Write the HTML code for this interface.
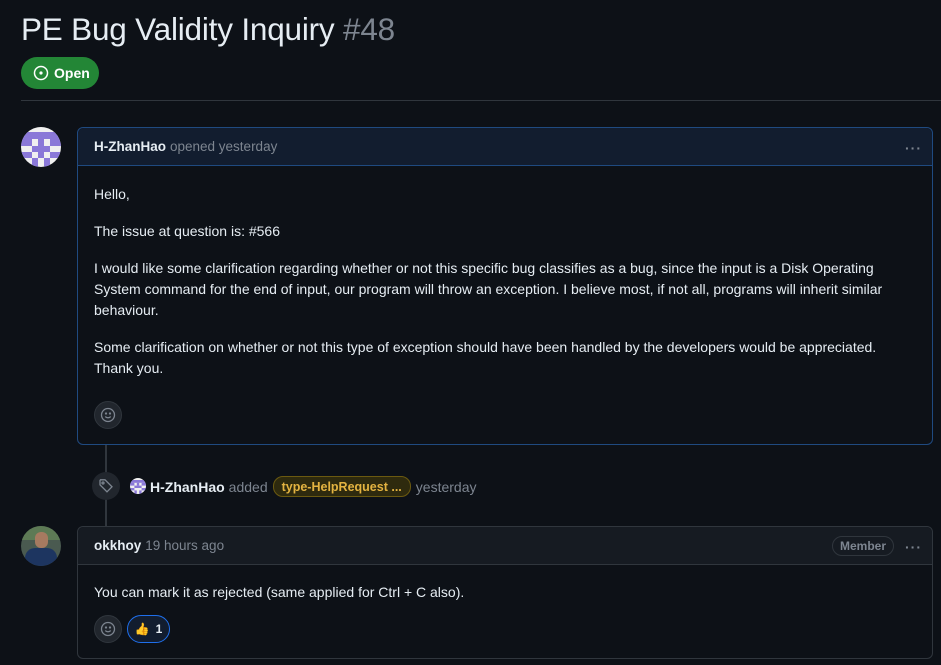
<!DOCTYPE html>
<html><head><meta charset="utf-8"><style>
*{box-sizing:border-box;margin:0;padding:0}
body{width:941px;height:665px;overflow:hidden;background:#0d1117;color:#e6edf3;font-family:"Liberation Sans",sans-serif;font-size:14px;position:relative}
.abs{position:absolute}
h1{position:absolute;left:21px;top:11px;font-weight:400;font-size:31.5px;color:#e6edf3;letter-spacing:-0.2px}
h1 span{color:#7d8590}
.open{left:21px;top:57px;width:78px;height:32px;border-radius:16px;background:#238636;color:#fff;font-weight:700;font-size:14px;display:flex;align-items:center;padding-left:12px;gap:5px}
.hr{left:21px;top:100px;width:920px;height:1px;background:#30363d}
.av{border-radius:50%;overflow:hidden}
.card{border:1px solid #30363d;border-radius:6px}
.hd{position:absolute;left:0;right:0;top:0;height:38px;border-bottom:1px solid #30363d;background:#161b22;border-radius:6px 6px 0 0;padding-left:16px;display:flex;align-items:center;font-size:13.5px;color:#7d8590}
.hd b{color:#e6edf3;margin-right:4px}
.dots{position:absolute;right:10px;top:12px;color:#7d8590;font-size:14px;letter-spacing:1px;font-weight:700}
.body p{margin-bottom:16px;line-height:21px;font-size:14px}
.react{width:28px;height:28px;border-radius:50%;background:#21262d;border:1px solid #30363d;display:flex;align-items:center;justify-content:center}
</style></head><body>
<h1>PE Bug Validity Inquiry <span>#48</span></h1>
<div class="abs open"><svg width="16" height="16" viewBox="0 0 16 16"><circle cx="8" cy="8" r="6.5" fill="none" stroke="#fff" stroke-width="1.5"/><circle cx="8" cy="8" r="1.6" fill="#fff"/></svg>Open</div>
<div class="abs hr"></div>

<div class="abs" style="left:105px;top:444px;width:2px;height:82px;background:#30363d"></div>

<div class="abs av" style="left:21px;top:127px;width:40px;height:40px;background:#f0f0f0">
<svg width="40" height="40" viewBox="0 0 40 40"><g fill="#8a78d8"><rect x="0" y="5" width="40" height="7"/><rect x="0" y="12" width="11" height="7"/><rect x="17" y="12" width="6" height="7"/><rect x="29" y="12" width="11" height="7"/><rect x="11" y="19" width="18" height="6"/><rect x="0" y="25" width="11" height="6"/><rect x="17" y="25" width="6" height="6"/><rect x="29" y="25" width="11" height="6"/><rect x="11" y="31" width="6" height="9"/><rect x="23" y="31" width="6" height="9"/></g></svg></div>
<div class="abs card" style="left:77px;top:127px;width:856px;height:318px;border-color:#1f4a80">
<div class="hd" style="background:#121d2f;border-bottom-color:#1f4a80"><b>H-ZhanHao</b> opened yesterday</div>
<div class="dots">···</div>
<div class="body abs" style="left:16px;top:56px;width:800px">
<p>Hello,</p>
<p>The issue at question is: #566</p>
<p>I would like some clarification regarding whether or not this specific bug classifies as a bug, since the input is a Disk Operating System command for the end of input, our program will throw an exception. I believe most, if not all, programs will inherit similar behaviour.</p>
<p>Some clarification on whether or not this type of exception should have been handled by the developers would be appreciated. Thank you.</p>
</div>
<div class="abs react" style="left:16px;top:273px"><svg width="16" height="16" viewBox="0 0 16 16" fill="none" stroke="#7d8590" stroke-width="1.3"><circle cx="8" cy="8" r="6.5"/><path d="M5.3 9.5c1.3 1.7 4.1 1.7 5.4 0"/><circle cx="6" cy="6.5" r=".5" fill="#7d8590"/><circle cx="10" cy="6.5" r=".5" fill="#7d8590"/></svg></div>
</div>

<div class="abs" style="left:92px;top:472px;width:28px;height:28px;border-radius:50%;background:#21262d;display:flex;align-items:center;justify-content:center"><svg width="16" height="16" viewBox="0 0 16 16" fill="none" stroke="#7d8590" stroke-width="1.3"><path d="M2 2.5v4.3l7 7 5-5-7-7H2.5z"/><circle cx="5" cy="5" r="1"/></svg></div>
<div class="abs av" style="left:130px;top:478px;width:16px;height:16px;background:#f0f0f0"><svg width="16" height="16" viewBox="0 0 40 40"><g fill="#8a78d8"><rect x="0" y="5" width="40" height="7"/><rect x="0" y="12" width="11" height="7"/><rect x="17" y="12" width="6" height="7"/><rect x="29" y="12" width="11" height="7"/><rect x="11" y="19" width="18" height="6"/><rect x="0" y="25" width="11" height="6"/><rect x="29" y="25" width="11" height="6"/><rect x="11" y="31" width="6" height="9"/><rect x="23" y="31" width="6" height="9"/></g></svg></div>
<div class="abs" style="left:150px;top:476px;font-size:14px;color:#7d8590;display:flex;align-items:center;gap:4px;white-space:nowrap"><b style="color:#e6edf3">H-ZhanHao</b> added <span style="display:inline-block;border:1px solid #6b5a10;background:#2e2a0e;color:#e3b341;font-weight:700;font-size:12.5px;border-radius:10px;padding:2px 8px;height:21px;line-height:16px;margin:0 1px">type-HelpRequest ...</span> yesterday</div>

<div class="abs av" style="left:21px;top:526px;width:40px;height:40px;background:#4a5a50">
<div class="abs" style="left:0;top:0;width:40px;height:14px;background:#5d7a55"></div>
<div class="abs" style="left:14px;top:6px;width:13px;height:16px;border-radius:6px;background:#a67a60"></div>
<div class="abs" style="left:4px;top:22px;width:32px;height:20px;border-radius:10px 10px 0 0;background:#1d3560"></div></div>
<div class="abs card" style="left:77px;top:526px;width:856px;height:133px">
<div class="hd"><b>okkhoy</b> 19 hours ago</div>
<div class="abs" style="right:38px;top:9px;height:20px;border:1px solid #30363d;border-radius:10px;padding:0 7px;font-size:12px;line-height:18px;color:#7d8590;font-weight:700">Member</div>
<div class="dots">···</div>
<div class="abs" style="left:16px;top:57px;font-size:14px">You can mark it as rejected (same applied for Ctrl + C also).</div>
<div class="abs react" style="left:16px;top:88px"><svg width="16" height="16" viewBox="0 0 16 16" fill="none" stroke="#7d8590" stroke-width="1.3"><circle cx="8" cy="8" r="6.5"/><path d="M5.3 9.5c1.3 1.7 4.1 1.7 5.4 0"/><circle cx="6" cy="6.5" r=".5" fill="#7d8590"/><circle cx="10" cy="6.5" r=".5" fill="#7d8590"/></svg></div>
<div class="abs" style="left:49px;top:88px;width:43px;height:28px;border:1px solid #1f6feb;border-radius:14px;background:#121d2f;display:flex;align-items:center;justify-content:center;gap:6px;font-size:12px;font-weight:700"><span style="font-size:12px">👍</span>1</div>
</div>
</body></html>
